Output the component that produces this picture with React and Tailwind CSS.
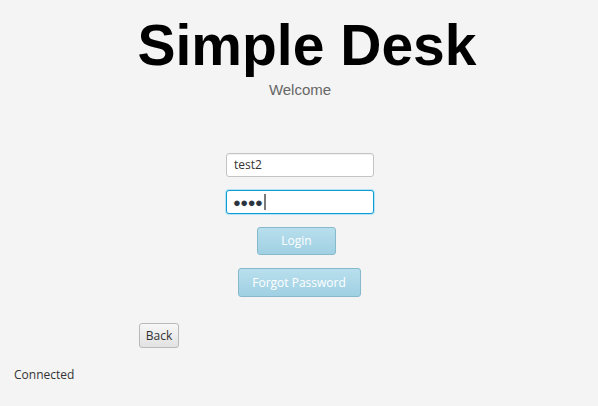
export default function App() {
  const ui = { fontFamily: '"Open Sans", "Noto Sans", sans-serif' };
  return (
    <div className="w-[598px] h-[406px] bg-[#f4f4f4] flex flex-col overflow-hidden" style={ui}>
      <div className="flex flex-col items-center">
        <h1
          className="mt-[17px] ml-[16px] text-[57px] leading-none font-bold text-black"
          style={{ fontFamily: '"Liberation Sans", Arial, sans-serif' }}
        >
          Simple Desk
        </h1>
        <div
          className="mt-[8px] ml-[2px] text-[15px] leading-[15px] text-[#666666]"
          style={{ fontFamily: '"Liberation Sans", Arial, sans-serif' }}
        >
          Welcome
        </div>

        <div className="mt-[56px] ml-[2px] w-[148px] h-[24px] bg-white border border-[#c4c4c4] rounded-[3px] shadow-[inset_0_1px_1px_rgba(0,0,0,0.06)] flex items-center px-[7px] text-[12px] text-[#333]">
          test2
        </div>

        <div className="mt-[13px] ml-[2px] w-[148px] h-[24px] bg-white border border-[#0a9ed4] rounded-[3px] shadow-[0_0_0_1px_#b6e2f3] flex items-center px-[6px]">
          <span className="text-[13px] leading-none text-[#2b3440] tracking-[-0.5px]">●●●●</span>
          <span className="ml-[2px] w-[2px] h-[16px] bg-[#7a7a7a]" />
        </div>

        <button className="mt-[13px] mr-[5px] w-[79px] h-[28px] rounded-[3px] border border-[#87b9cd] bg-gradient-to-b from-[#b8dfed] to-[#a0d0e3] text-[12px] text-white">
          Login
        </button>

        <button className="mt-[13px] w-[123px] h-[29px] rounded-[3px] border border-[#87b9cd] bg-gradient-to-b from-[#b8dfed] to-[#a0d0e3] text-[12px] text-white">
          Forgot Password
        </button>
      </div>

      <div className="flex pl-[139px] mt-[26px]">
        <button className="w-[40px] h-[25px] rounded-[3px] border border-[#b9b9b9] bg-gradient-to-b from-[#f7f7f7] to-[#e2e2e2] text-[12px] text-[#333] leading-none">
          Back
        </button>
      </div>

      <div className="pl-[14px] mt-[18px] text-[12px] text-[#333]">Connected</div>
    </div>
  );
}
